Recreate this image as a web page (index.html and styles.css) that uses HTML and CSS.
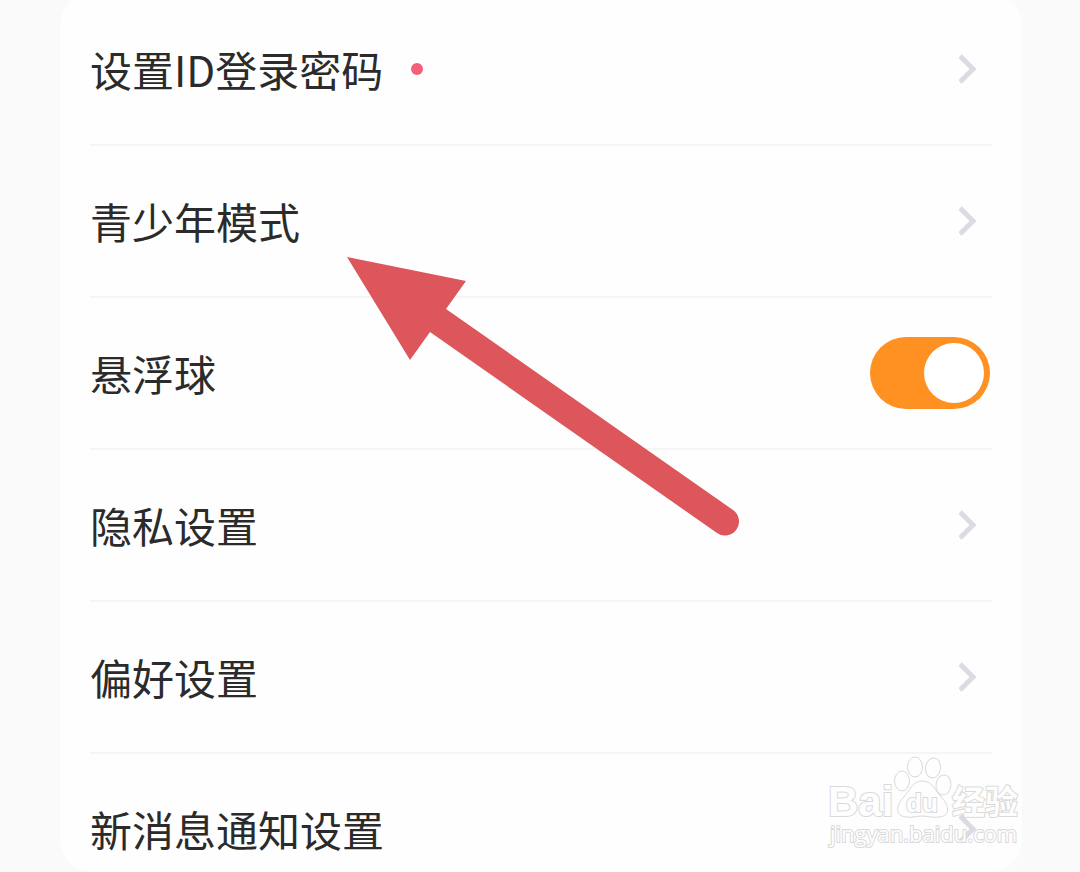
FILE: index.html
```html
<!DOCTYPE html>
<html lang="zh-CN">

<head>
    <meta charset="UTF-8">
    <meta name="viewport" content="width=device-width, initial-scale=1.0">
    <title>设置</title>
    <link rel="stylesheet" href="styles.css">
</head>

<body>
    <main class="page">
        <ul class="card">
            <li>
                <a class="row" href="#password">
                    <span class="label">设置ID登录密码</span>
                    <span class="dot"></span>
                    <svg class="chevron" viewBox="0 0 18 32"><path d="M1 3L14 16L1 29" /></svg>
                </a>
            </li>
            <li>
                <a class="row" href="#teen">
                    <span class="label">青少年模式</span>
                    <svg class="chevron" viewBox="0 0 18 32"><path d="M1 3L14 16L1 29" /></svg>
                </a>
            </li>
            <li class="row">
                <label class="label" for="floatBall">悬浮球</label>
                <input class="switch" type="checkbox" id="floatBall" checked>
            </li>
            <li>
                <a class="row" href="#privacy">
                    <span class="label">隐私设置</span>
                    <svg class="chevron" viewBox="0 0 18 32"><path d="M1 3L14 16L1 29" /></svg>
                </a>
            </li>
            <li>
                <a class="row" href="#preference">
                    <span class="label">偏好设置</span>
                    <svg class="chevron" viewBox="0 0 18 32"><path d="M1 3L14 16L1 29" /></svg>
                </a>
            </li>
            <li>
                <a class="row row-last" href="#notification">
                    <span class="label">新消息通知设置</span>
                    <svg class="chevron" viewBox="0 0 18 32"><path d="M1 3L14 16L1 29" /></svg>
                </a>
            </li>
        </ul>

        <!-- Arrow pointing at the teen mode row -->
        <svg class="arrow" viewBox="0 0 392 280">
            <path d="M0 0L119 24L99 52L386 253A14 14 0 0 1 370 276L83 75L63 103Z" />
        </svg>

        <!-- Watermark -->
        <svg class="watermark" viewBox="0 0 200 96">
            <text class="mark-bai" x="2" y="61">Bai</text>
            <ellipse cx="76" cy="26" rx="7.5" ry="10" />
            <ellipse cx="89" cy="12" rx="7.5" ry="10" />
            <ellipse cx="107" cy="13" rx="7.5" ry="10" transform="rotate(8 107 13)" />
            <ellipse cx="117.5" cy="30" rx="7.5" ry="10" transform="rotate(8 117.5 30)" />
            <path d="M96 26C107 26 109 36 116 43C124 51 124 62 112 62C106 63 102 61 96 61C90 61 86 63 80 62C69 61 70 50 77 43C84 36 86 26 96 26Z" />
            <text class="mark-du" x="80" y="57">du</text>
            <text class="mark-cn" x="126" y="59">经验</text>
            <text class="mark-url" x="4" y="87">jingyan.baidu.com</text>
        </svg>
    </main>
</body>

</html>
```
FILE: styles.css
```css
* {
    margin: 0;
    padding: 0;
    box-sizing: border-box;
}

body {
    background-color: #fafafa;
    color: #2b2b2b;
    font-family: "Noto Sans CJK SC", sans-serif;
    overflow-x: hidden;
}

.page {
    position: relative;
    overflow: hidden;
    padding: 0 58px 0 60px;
}

.card {
    list-style: none;
    margin-top: -6px;
    padding: 0 30px;
    background-color: #fefefe;
    border-radius: 32px;
}

.row {
    display: flex;
    align-items: center;
    padding: 45px 0;
    border-bottom: 2px solid #f5f5f5;
    color: inherit;
    text-decoration: none;
}

.row-last {
    padding-bottom: 13px;
    border-bottom: none;
}

.label {
    font-size: 42px;
    line-height: 60px;
}

.dot {
    width: 12px;
    height: 12px;
    margin-left: 28px;
    border-radius: 50%;
    background-color: #f4607a;
}

.chevron {
    width: 18px;
    height: 32px;
    margin-left: auto;
    margin-right: 15px;
    fill: none;
    stroke: #dcdbe3;
    stroke-width: 5;
}

.switch {
    appearance: none;
    width: 120px;
    height: 72px;
    margin: -6px 2px -6px auto;
    padding: 6px;
    display: flex;
    border-radius: 36px;
    background-color: #ccc;
    cursor: pointer;
}

.switch::before {
    content: "";
    width: 60px;
    height: 60px;
    border-radius: 50%;
    background-color: #fff;
}

.switch:checked {
    justify-content: flex-end;
    background-color: #ff9022;
}

.arrow {
    position: absolute;
    left: 347px;
    top: 257px;
    width: 392px;
    height: 280px;
    fill: #dc565b;
    pointer-events: none;
}

.watermark {
    position: absolute;
    right: 54px;
    bottom: 21px;
    width: 200px;
    height: 96px;
    fill: #fefefe;
    stroke: #d9d9d9;
    stroke-width: 1;
    pointer-events: none;
}

.watermark text {
    paint-order: stroke;
    stroke-width: 2;
}

.mark-bai {
    font: bold 42px "Liberation Sans", sans-serif;
}

.mark-du {
    font: bold 26px "Liberation Sans", sans-serif;
}

.mark-cn {
    font: bold 33px "Noto Sans CJK SC", sans-serif;
}

.mark-url {
    font: 22px "Open Sans", sans-serif;
}
```
